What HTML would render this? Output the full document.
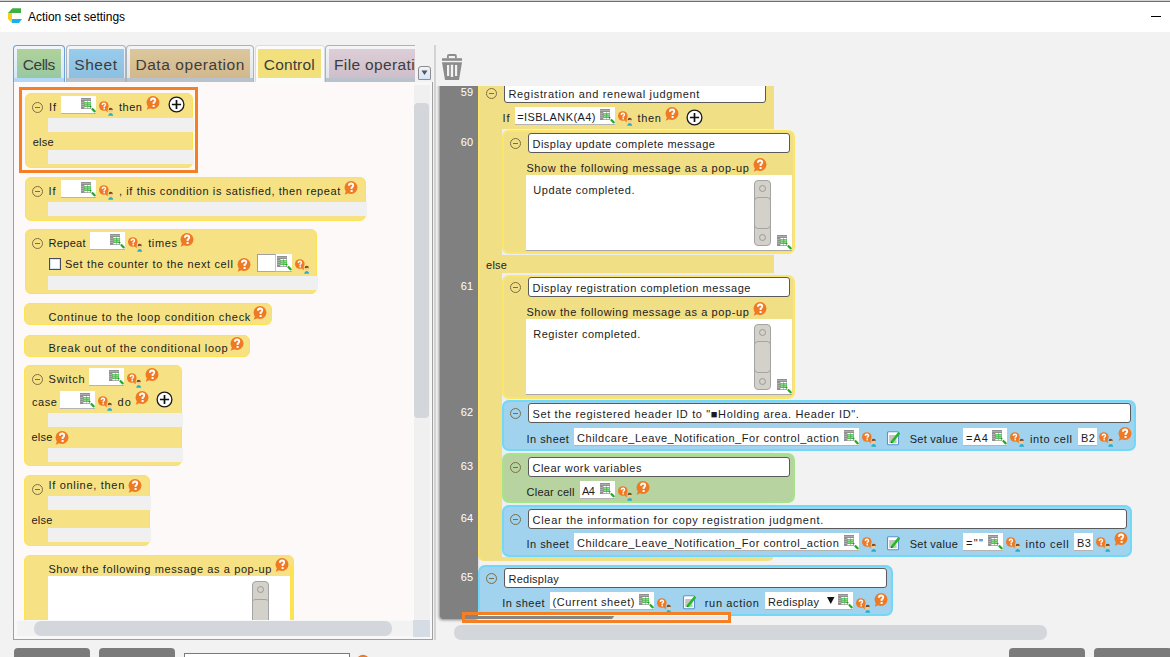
<!DOCTYPE html><html><head><meta charset="utf-8"><style>
html,body{margin:0;padding:0;}
body{width:1170px;height:657px;overflow:hidden;position:relative;background:#f2f2f2;font-family:"Liberation Sans",sans-serif;}
.t{position:absolute;white-space:nowrap;line-height:1;font-family:"Liberation Sans",sans-serif;}
svg{overflow:visible}
</style></head><body>
<svg width="0" height="0" style="position:absolute">
<defs>
<symbol id="grid" viewBox="0 0 15 15">
 <rect x="0" y="0" width="10" height="11" fill="#909090"/>
 <path d="M0 1.5H10M0 4.5H3.4M0 6.5H3.4M0 8.5H3.4" stroke="#c0c0c0" stroke-width="0.6"/>
 <rect x="3.4" y="3" width="3" height="1" fill="#fff"/><rect x="6.9" y="3" width="2.6" height="1" fill="#fff"/>
 <rect x="3.4" y="4" width="6.6" height="4.8" fill="#4cbf4c"/>
 <rect x="3.8" y="4.5" width="2.3" height="1.5" fill="#8fd88f"/><rect x="7.2" y="4.5" width="2.3" height="1.5" fill="#8fd88f"/>
 <rect x="3.8" y="6.6" width="2.3" height="1.5" fill="#8fd88f"/><rect x="7.2" y="6.6" width="2.3" height="1.5" fill="#8fd88f"/>
 <rect x="3.4" y="9" width="3" height="1.3" fill="#fff"/><rect x="6.9" y="9" width="2.6" height="1.3" fill="#fff"/>
 <circle cx="9.6" cy="8.6" r="0.9" fill="#1a9a1a"/>
 <path d="M11.6 11.2L13.6 13.3" stroke="#22aa22" stroke-width="2.3" stroke-linecap="round"/>
</symbol>
<symbol id="qp" viewBox="0 0 16 16">
 <circle cx="4.8" cy="5" r="4.8" fill="#ef7a25"/>
 <path d="M6 8.8L8.8 11.5L8.6 7.2Z" fill="#ef7a25"/>
 <path d="M3.2 3.9Q3.3 2.2 4.9 2.2Q6.6 2.3 6.5 3.8Q6.4 4.8 5.2 5.3V6.4" stroke="#fff" stroke-width="1.4" fill="none"/>
 <rect x="4.5" y="7" width="1.4" height="1.4" fill="#fff"/>
 <path d="M9.2 14.8Q9.4 12.3 11.7 12.1Q14 12.3 14.2 14.8Z" fill="#22b0c8"/>
 <circle cx="11.7" cy="9.6" r="2" fill="#f7c890"/>
 <path d="M9.6 9.2Q9.6 6.8 11.7 6.8Q13.8 6.8 13.8 9.2Q12.5 8.2 9.6 9.2Z" fill="#7a4a1c"/>
</symbol>
<symbol id="help" viewBox="0 0 15 15">
 <circle cx="7" cy="6.5" r="6.5" fill="#ef7a25"/>
 <path d="M2.2 9.2L0.7 13.8L6 11.6Z" fill="#ef7a25"/>
 <path d="M4.9 4.7Q5 2.5 7.1 2.5Q9.3 2.6 9.2 4.5Q9.1 5.8 7.6 6.5V8" stroke="#fff" stroke-width="1.9" fill="none"/>
 <rect x="6.6" y="9" width="2" height="2" fill="#fff"/>
</symbol>
<symbol id="plus" viewBox="0 0 17 17">
 <circle cx="8.5" cy="8.5" r="7.4" fill="#fff" stroke="#1a1a1a" stroke-width="1.3"/>
 <path d="M3.9 8.5H13.1M8.5 3.9V13.1" stroke="#111" stroke-width="1.7"/>
</symbol>
<symbol id="minus" viewBox="0 0 12 12">
 <circle cx="5.5" cy="5.5" r="5" fill="none" stroke="#7a6e48" stroke-width="1"/>
 <path d="M3 5.5H8" stroke="#7a6e48" stroke-width="1"/>
</symbol>
<symbol id="edit" viewBox="0 0 14 15">
 <rect x="1.5" y="0.8" width="11" height="13" rx="1" fill="#fff" stroke="#5a90d8" stroke-width="1.1"/>
 <rect x="3.2" y="4" width="7.3" height="7.5" fill="#c4c4c4"/>
 <rect x="3.2" y="10.5" width="7.3" height="1.5" fill="#9ade9a"/>
 <path d="M6 10.8L12.6 2.6" stroke="#22bb22" stroke-width="2.6" stroke-linecap="round"/>
 <path d="M6 10.8L5.2 12" stroke="#444" stroke-width="1"/>
</symbol>
</defs></svg>

<div style="position:absolute;left:0.0px;top:0.0px;width:1170.0px;height:1.0px;background:#d4d4d4"></div>
<div style="position:absolute;left:0.0px;top:1.0px;width:1170.0px;height:1.0px;background:#6e6e6e"></div>
<div style="position:absolute;left:0.0px;top:2.0px;width:1170.0px;height:30.0px;background:#fff"></div>
<svg style="position:absolute;left:7px;top:7px" width="16" height="17" viewBox="0 0 16 17">
<path d="M1 6L5.4 1.2L14 1.2V6Z" fill="#3cb043"/>
<path d="M1 6H5V16L1 12Z" fill="#f9cf1a"/>
<path d="M5 12H15L12 16H5Z" fill="#1ab0ec"/>
</svg>
<div class="t" style="left:28.0px;top:11px;font-size:12px;color:#000;letter-spacing:-0.019px;">Action set settings</div>
<div style="position:absolute;left:1151.0px;top:16.0px;width:10.0px;height:1.0px;background:#000"></div>
<div style="position:absolute;left:13.0px;top:45.0px;width:52.0px;height:37.0px;border:1px solid #6f9fd4;border-bottom:none;border-radius:4px 4px 0 0;box-sizing:border-box;background:linear-gradient(#f3f6fb,#cfe6fb);"></div>
<div style="position:absolute;left:17.0px;top:49.0px;width:44.0px;height:29.0px;background:linear-gradient(#b0d29a,#98c8a2)"></div>
<div style="position:absolute;left:14.0px;top:78.0px;width:50.0px;height:4.0px;background:#b3d7f7"></div>
<div class="t" style="left:22.8px;top:57px;font-size:15.5px;color:#3c3c3c;letter-spacing:-0.488px;">Cells</div>
<div style="position:absolute;left:65.5px;top:45.0px;width:60.5px;height:37.0px;border:1px solid #a9b3be;border-bottom:none;border-radius:4px 4px 0 0;box-sizing:border-box;background:linear-gradient(#f4f5f7,#dfe3e8);"></div>
<div style="position:absolute;left:69.0px;top:49.0px;width:54.5px;height:29.0px;background:linear-gradient(#98cced,#8cbfe0)"></div>
<div style="position:absolute;left:66.5px;top:78.0px;width:58.5px;height:4.0px;background:#b9c3cd"></div>
<div class="t" style="left:74.3px;top:57px;font-size:15.5px;color:#3c3c3c;letter-spacing:0.549px;">Sheet</div>
<div style="position:absolute;left:126.0px;top:45.0px;width:128.0px;height:37.0px;border:1px solid #a9b3be;border-bottom:none;border-radius:4px 4px 0 0;box-sizing:border-box;background:linear-gradient(#f4f5f7,#dfe3e8);"></div>
<div style="position:absolute;left:130.3px;top:49.0px;width:120.0px;height:29.0px;background:linear-gradient(#dcc79c,#d2b88c)"></div>
<div style="position:absolute;left:127.0px;top:78.0px;width:126.0px;height:4.0px;background:#b9c3cd"></div>
<div class="t" style="left:135.4px;top:57px;font-size:15.5px;color:#3c3c3c;letter-spacing:0.564px;">Data operation</div>
<div style="position:absolute;left:255.0px;top:45.0px;width:70.0px;height:37.0px;border:1px solid #d8dde3;border-bottom:none;border-radius:4px 4px 0 0;box-sizing:border-box;background:linear-gradient(#fbfbfb,#fbfbfb);"></div>
<div style="position:absolute;left:258.2px;top:49.0px;width:62.8px;height:29.0px;background:#f2e07c"></div>
<div class="t" style="left:263.8px;top:57px;font-size:15.5px;color:#3c3c3c;letter-spacing:0.139px;">Control</div>
<div style="position:absolute;left:325.3px;top:45px;width:90px;height:37px;overflow:hidden">
<div style="position:absolute;left:0;top:0;width:100px;height:37px;border:1px solid #a9b3be;border-bottom:none;border-radius:4px 4px 0 0;box-sizing:border-box;background:linear-gradient(#f4f5f7,#dfe3e8)"></div>
<div style="position:absolute;left:3.3px;top:4px;width:100px;height:29px;background:linear-gradient(#dccdd6,#cfbfcb)"></div>
<div style="position:absolute;left:1px;top:33px;width:100px;height:4px;background:#b9c3cd"></div>
<div class="t" style="left:8.7px;top:12px;font-size:15.5px;color:#3c3c3c;letter-spacing:0.37px">File operation</div>
</div>
<div style="position:absolute;left:418.0px;top:66.0px;width:13.0px;height:14.0px;border:1px solid #8c8c8c;border-radius:3px 3px 1px 1px;box-sizing:border-box;background:linear-gradient(#eef4fc,#d6e6f8);"></div>
<svg style="position:absolute;left:421px;top:70px" width="8" height="6"><path d="M0.5 0.5H6.5L3.5 5Z" fill="#555"/></svg>
<div style="position:absolute;left:13.0px;top:82.0px;width:420.0px;height:558.0px;border:1px solid #a0a0a0;border-top:none;box-sizing:border-box;background:#f8f8f8;"></div>
<div style="position:absolute;left:14.0px;top:82.0px;width:400.0px;height:538.0px;background:#fcf9f8;"></div>
<div style="position:absolute;left:414.0px;top:85.0px;width:15.5px;height:535.0px;background:#f0f0f0;"></div>
<div style="position:absolute;left:414.0px;top:103.0px;width:15.0px;height:315.0px;background:#d3d6da;border-radius:4px;"></div>
<div style="position:absolute;left:17.0px;top:621.0px;width:396.0px;height:15.0px;background:#f2f2f2;"></div>
<div style="position:absolute;left:34.0px;top:621.0px;width:358.0px;height:15.0px;background:#d3d6da;border-radius:7px;"></div>
<div style="position:absolute;left:413.0px;top:620.0px;width:17.0px;height:17.0px;background:#d5dce6;"></div>
<div style="position:absolute;left:434.0px;top:45.0px;width:2.0px;height:595.0px;background:#d3d3d3"></div>
<div style="position:absolute;left:14px;top:82px;width:399px;height:538px;overflow:hidden">
<div style="position:absolute;left:-14px;top:-82px;width:1170px;height:657px">
<div style="position:absolute;left:25.0px;top:93.0px;width:168.0px;height:75.0px;background:#f6e284;border-radius:6px;border:1px solid #fde253;box-sizing:border-box;"></div>
<div style="position:absolute;left:48.0px;top:118.0px;width:146.0px;height:14.0px;background:#f0f0f0"></div>
<div style="position:absolute;left:48.0px;top:150.0px;width:146.0px;height:14.0px;background:#f0f0f0"></div>
<svg style="position:absolute;left:32.0px;top:102.0px" width="12" height="12"><use href="#minus"/></svg>
<div class="t" style="left:49.0px;top:102px;font-size:11px;color:#1c1c1c;letter-spacing:0.875px;">If</div>
<div style="position:absolute;left:61.0px;top:96.0px;width:35.0px;height:18.0px;background:#fff;border-bottom:1px solid #b4b4b4;box-sizing:border-box;"></div>
<svg style="position:absolute;left:81.0px;top:98.0px" width="15" height="15"><use href="#grid"/></svg>
<svg style="position:absolute;left:99.0px;top:101.0px" width="16" height="16"><use href="#qp"/></svg>
<div class="t" style="left:119.0px;top:102px;font-size:11px;color:#1c1c1c;letter-spacing:0.521px;">then</div>
<svg style="position:absolute;left:146.0px;top:96.0px" width="15" height="15"><use href="#help"/></svg>
<svg style="position:absolute;left:167.5px;top:96.3px" width="17" height="17"><use href="#plus"/></svg>
<div class="t" style="left:32.7px;top:137px;font-size:11px;color:#1c1c1c;letter-spacing:0.271px;">else</div>
<div style="position:absolute;left:19.0px;top:87.0px;width:179.0px;height:86.0px;border:3px solid #f57f25;box-sizing:border-box;"></div>
<div style="position:absolute;left:25.0px;top:177.0px;width:341.0px;height:44.0px;background:#f6e284;border-radius:6px;border:1px solid #fde253;box-sizing:border-box;"></div>
<div style="position:absolute;left:48.0px;top:202.0px;width:319.0px;height:14.0px;background:#f0f0f0"></div>
<svg style="position:absolute;left:32.0px;top:186.0px" width="12" height="12"><use href="#minus"/></svg>
<div class="t" style="left:48.6px;top:186px;font-size:11px;color:#1c1c1c;letter-spacing:0.875px;">If</div>
<div style="position:absolute;left:61.0px;top:180.0px;width:35.0px;height:18.0px;background:#fff;border-bottom:1px solid #b4b4b4;box-sizing:border-box;"></div>
<svg style="position:absolute;left:81.0px;top:182.0px" width="15" height="15"><use href="#grid"/></svg>
<svg style="position:absolute;left:99.0px;top:185.0px" width="16" height="16"><use href="#qp"/></svg>
<div class="t" style="left:119.0px;top:186px;font-size:11px;color:#1c1c1c;letter-spacing:0.597px;">, if this condition is satisfied, then repeat</div>
<svg style="position:absolute;left:344.0px;top:181.0px" width="15" height="15"><use href="#help"/></svg>
<div style="position:absolute;left:25.0px;top:229.0px;width:292.0px;height:65.0px;background:#f6e284;border-radius:6px;border:1px solid #fde253;box-sizing:border-box;"></div>
<div style="position:absolute;left:48.0px;top:276.0px;width:270.0px;height:14.0px;background:#f0f0f0"></div>
<svg style="position:absolute;left:32.0px;top:238.0px" width="12" height="12"><use href="#minus"/></svg>
<div class="t" style="left:48.6px;top:238px;font-size:11px;color:#1c1c1c;letter-spacing:0.300px;">Repeat</div>
<div style="position:absolute;left:90.0px;top:232.0px;width:35.0px;height:18.0px;background:#fff;border-bottom:1px solid #b4b4b4;box-sizing:border-box;"></div>
<svg style="position:absolute;left:110.0px;top:234.0px" width="15" height="15"><use href="#grid"/></svg>
<svg style="position:absolute;left:128.0px;top:237.0px" width="16" height="16"><use href="#qp"/></svg>
<div class="t" style="left:148.2px;top:238px;font-size:11px;color:#1c1c1c;letter-spacing:0.630px;">times</div>
<svg style="position:absolute;left:180.0px;top:233.0px" width="15" height="15"><use href="#help"/></svg>
<div style="position:absolute;left:49.0px;top:258.0px;width:12.0px;height:12.0px;border:1px solid #4a4a58;box-sizing:border-box;background:#fff;box-shadow:inset 0 0 0 1px #cfe6fb;"></div>
<div class="t" style="left:64.9px;top:259px;font-size:11px;color:#1c1c1c;letter-spacing:0.624px;">Set the counter to the next cell</div>
<svg style="position:absolute;left:237.0px;top:258.0px" width="15" height="15"><use href="#help"/></svg>
<div style="position:absolute;left:257.0px;top:254.0px;width:35.0px;height:18.0px;background:#fff;border-bottom:1px solid #b4b4b4;box-sizing:border-box;"></div>
<svg style="position:absolute;left:277.0px;top:256.0px" width="15" height="15"><use href="#grid"/></svg>
<div style="position:absolute;left:257.0px;top:254.0px;width:19.0px;height:18.0px;border:1px solid #a0a0a0;border-right-color:#c8c8c8;border-bottom-color:#a8a8b0;box-sizing:border-box;"></div>
<svg style="position:absolute;left:295.0px;top:259.0px" width="16" height="16"><use href="#qp"/></svg>
<div style="position:absolute;left:24.0px;top:303.0px;width:248.0px;height:22.0px;background:#f6e284;border-radius:6px;border:1px solid #fde253;box-sizing:border-box;"></div>
<div class="t" style="left:48.4px;top:312px;font-size:11px;color:#1c1c1c;letter-spacing:0.703px;">Continue to the loop condition check</div>
<svg style="position:absolute;left:253.0px;top:306.0px" width="15" height="15"><use href="#help"/></svg>
<div style="position:absolute;left:24.0px;top:335.0px;width:226.0px;height:22.0px;background:#f6e284;border-radius:6px;border:1px solid #fde253;box-sizing:border-box;"></div>
<div class="t" style="left:48.4px;top:343px;font-size:11px;color:#1c1c1c;letter-spacing:0.690px;">Break out of the conditional loop</div>
<svg style="position:absolute;left:230.0px;top:337.0px" width="15" height="15"><use href="#help"/></svg>
<div style="position:absolute;left:24.0px;top:365.0px;width:158.0px;height:101.0px;background:#f6e284;border-radius:6px;border:1px solid #fde253;box-sizing:border-box;"></div>
<div style="position:absolute;left:48.0px;top:413.0px;width:135.0px;height:14.0px;background:#f0f0f0"></div>
<div style="position:absolute;left:48.0px;top:448.0px;width:135.0px;height:14.0px;background:#f0f0f0"></div>
<svg style="position:absolute;left:32.0px;top:374.0px" width="12" height="12"><use href="#minus"/></svg>
<div class="t" style="left:48.6px;top:374px;font-size:11px;color:#1c1c1c;letter-spacing:0.719px;">Switch</div>
<div style="position:absolute;left:89.0px;top:368.0px;width:35.0px;height:18.0px;background:#fff;border-bottom:1px solid #b4b4b4;box-sizing:border-box;"></div>
<svg style="position:absolute;left:109.0px;top:370.0px" width="15" height="15"><use href="#grid"/></svg>
<svg style="position:absolute;left:127.0px;top:373.0px" width="16" height="16"><use href="#qp"/></svg>
<svg style="position:absolute;left:145.0px;top:368.0px" width="15" height="15"><use href="#help"/></svg>
<div class="t" style="left:31.9px;top:397px;font-size:11px;color:#1c1c1c;letter-spacing:0.583px;">case</div>
<div style="position:absolute;left:60.0px;top:391.0px;width:35.0px;height:18.0px;background:#fff;border-bottom:1px solid #b4b4b4;box-sizing:border-box;"></div>
<svg style="position:absolute;left:80.0px;top:393.0px" width="15" height="15"><use href="#grid"/></svg>
<svg style="position:absolute;left:98.0px;top:396.0px" width="16" height="16"><use href="#qp"/></svg>
<div class="t" style="left:117.4px;top:397px;font-size:11px;color:#1c1c1c;letter-spacing:1.250px;">do</div>
<svg style="position:absolute;left:135.0px;top:391.0px" width="15" height="15"><use href="#help"/></svg>
<svg style="position:absolute;left:156.4px;top:391.1px" width="17" height="17"><use href="#plus"/></svg>
<div class="t" style="left:31.4px;top:432px;font-size:11px;color:#1c1c1c;letter-spacing:0.271px;">else</div>
<svg style="position:absolute;left:55.0px;top:431.0px" width="15" height="15"><use href="#help"/></svg>
<div style="position:absolute;left:24.0px;top:475.0px;width:126.0px;height:71.0px;background:#f6e284;border-radius:6px;border:1px solid #fde253;box-sizing:border-box;"></div>
<div style="position:absolute;left:48.0px;top:496.0px;width:103.0px;height:14.0px;background:#f0f0f0"></div>
<div style="position:absolute;left:48.0px;top:528.0px;width:103.0px;height:14.0px;background:#f0f0f0"></div>
<svg style="position:absolute;left:32.0px;top:484.0px" width="12" height="12"><use href="#minus"/></svg>
<div class="t" style="left:48.4px;top:480px;font-size:11px;color:#1c1c1c;letter-spacing:0.705px;">If online, then</div>
<svg style="position:absolute;left:128.0px;top:479.0px" width="15" height="15"><use href="#help"/></svg>
<div class="t" style="left:31.4px;top:515px;font-size:11px;color:#1c1c1c;letter-spacing:0.271px;">else</div>
<div style="position:absolute;left:24.0px;top:555.0px;width:270.0px;height:105.0px;background:#f6e284;border-radius:6px;border:1px solid #fde253;box-sizing:border-box;"></div>
<div style="position:absolute;left:290.0px;top:565.0px;width:3.0px;height:95.0px;background:#fde253"></div>
<div class="t" style="left:48.4px;top:564px;font-size:11px;color:#1c1c1c;letter-spacing:0.608px;">Show the following message as a pop-up</div>
<svg style="position:absolute;left:275.0px;top:558.0px" width="15" height="15"><use href="#help"/></svg>
<div style="position:absolute;left:48.0px;top:576.0px;width:242.0px;height:64.0px;background:#fff"></div>
<div style="position:absolute;left:252.0px;top:581.0px;width:17.0px;height:69.0px;background:#d3d1c9;border:1px solid #a4a4a4;border-radius:4px;box-sizing:border-box;"></div>
<div style="position:absolute;left:252.0px;top:599.0px;width:17.0px;height:51.0px;border-top:1px solid #a4a4a4;border-radius:4px;box-sizing:border-box;"></div>
<svg style="position:absolute;left:256px;top:585px" width="9" height="9"><circle cx="4.5" cy="4.5" r="3" fill="none" stroke="#999"/></svg>
</div></div>
<div style="position:absolute;left:436px;top:86px;width:734px;height:537px;overflow:hidden">
<div style="position:absolute;left:-436px;top:-86px;width:1170px;height:657px">
<div style="position:absolute;left:440.0px;top:60.0px;width:38.0px;height:559.0px;background:#808080;border-radius:0 0 0 4px;box-shadow:-1px 1px 3px rgba(0,0,0,0.45);"></div>
<div class="t" style="left:460.8px;top:87px;font-size:11px;color:#fff;letter-spacing:0.050px;">59</div>
<div class="t" style="left:460.8px;top:137px;font-size:11px;color:#fff;letter-spacing:0.050px;">60</div>
<div class="t" style="left:460.8px;top:281px;font-size:11px;color:#fff;letter-spacing:0.050px;">61</div>
<div class="t" style="left:460.8px;top:407px;font-size:11px;color:#fff;letter-spacing:0.050px;">62</div>
<div class="t" style="left:460.8px;top:461px;font-size:11px;color:#fff;letter-spacing:0.050px;">63</div>
<div class="t" style="left:460.8px;top:513px;font-size:11px;color:#fff;letter-spacing:0.050px;">64</div>
<div class="t" style="left:460.8px;top:572px;font-size:11px;color:#fff;letter-spacing:0.050px;">65</div>
<div style="position:absolute;left:478.0px;top:60.0px;width:296.0px;height:501.0px;background:#f1df86;border-radius:0 0 6px 6px;box-shadow:inset 2px 0 0 #fbe56c;"></div>
<svg style="position:absolute;left:486.0px;top:88.0px" width="12" height="12"><use href="#minus"/></svg>
<div style="position:absolute;left:504.0px;top:70.0px;width:262.0px;height:33.0px;background:#fff;border:1px solid #5a5a5a;border-radius:3px;box-sizing:border-box;"></div>
<div class="t" style="left:508.5px;top:89px;font-size:11px;color:#1c1c1c;letter-spacing:0.653px;">Registration and renewal judgment</div>
<div class="t" style="left:502.6px;top:113px;font-size:11px;color:#1c1c1c;letter-spacing:0.875px;">If</div>
<div style="position:absolute;left:515.0px;top:107.0px;width:100.0px;height:18.0px;background:#fff;border-bottom:1px solid #b4b4b4;box-sizing:border-box;"></div>
<svg style="position:absolute;left:600.0px;top:109.0px" width="15" height="15"><use href="#grid"/></svg>
<div class="t" style="left:517.2px;top:112px;font-size:11px;color:#1c1c1c;letter-spacing:0.418px;">=ISBLANK(A4)</div>
<svg style="position:absolute;left:618.0px;top:111.0px" width="16" height="16"><use href="#qp"/></svg>
<div class="t" style="left:637.6px;top:113px;font-size:11px;color:#1c1c1c;letter-spacing:0.654px;">then</div>
<svg style="position:absolute;left:665.0px;top:107.0px" width="15" height="15"><use href="#help"/></svg>
<svg style="position:absolute;left:686.0px;top:108.5px" width="17" height="17"><use href="#plus"/></svg>
<div style="position:absolute;left:502.0px;top:129.0px;width:272.0px;height:126.0px;background:#eceef2"></div>
<div style="position:absolute;left:502.0px;top:273.0px;width:272.0px;height:284.0px;background:#eceef2"></div>
<div style="position:absolute;left:502.0px;top:130.0px;width:293.0px;height:124.0px;background:#f1df86;border:2px solid #fbe56c;border-radius:7px;box-sizing:border-box;"></div>
<svg style="position:absolute;left:510.0px;top:138.0px" width="12" height="12"><use href="#minus"/></svg>
<div style="position:absolute;left:528.0px;top:133.0px;width:262.0px;height:20.0px;background:#fff;border:1px solid #5a5a5a;border-radius:3px;box-sizing:border-box;"></div>
<div class="t" style="left:532.5px;top:139px;font-size:11px;color:#1c1c1c;letter-spacing:0.475px;">Display update complete message</div>
<div class="t" style="left:526.4px;top:163px;font-size:11px;color:#1c1c1c;letter-spacing:0.591px;">Show the following message as a pop-up</div>
<svg style="position:absolute;left:753.0px;top:158.0px" width="15" height="15"><use href="#help"/></svg>
<div style="position:absolute;left:526.0px;top:175.0px;width:266.0px;height:76.0px;background:#fff;border-bottom:1px solid #a8a8a8;box-sizing:border-box;"></div>
<div class="t" style="left:533.3px;top:185px;font-size:11px;color:#1c1c1c;letter-spacing:0.556px;">Update completed.</div>
<div style="position:absolute;left:754.0px;top:180.0px;width:17.0px;height:66.0px;background:#d3d1c9;border:1px solid #a4a4a4;border-radius:4px;box-sizing:border-box;"></div>
<div style="position:absolute;left:754.0px;top:197.0px;width:17.0px;height:32.0px;border:1px solid #a4a4a4;border-radius:4px;box-sizing:border-box;"></div>
<svg style="position:absolute;left:758.0px;top:184.0px" width="9" height="60"><circle cx="4.5" cy="4.5" r="3" fill="none" stroke="#999"/><circle cx="4.5" cy="53.5" r="3" fill="none" stroke="#999"/></svg>
<svg style="position:absolute;left:777.0px;top:235.0px" width="15" height="15"><use href="#grid"/></svg>
<div class="t" style="left:486.0px;top:260px;font-size:11px;color:#1c1c1c;letter-spacing:0.271px;">else</div>
<div style="position:absolute;left:502.0px;top:275.0px;width:293.0px;height:124.0px;background:#f1df86;border:2px solid #fbe56c;border-radius:7px;box-sizing:border-box;"></div>
<svg style="position:absolute;left:510.0px;top:282.0px" width="12" height="12"><use href="#minus"/></svg>
<div style="position:absolute;left:528.0px;top:277.0px;width:262.0px;height:20.0px;background:#fff;border:1px solid #5a5a5a;border-radius:3px;box-sizing:border-box;"></div>
<div class="t" style="left:532.5px;top:283px;font-size:11px;color:#1c1c1c;letter-spacing:0.538px;">Display registration completion message</div>
<div class="t" style="left:526.4px;top:307px;font-size:11px;color:#1c1c1c;letter-spacing:0.591px;">Show the following message as a pop-up</div>
<svg style="position:absolute;left:753.0px;top:302.0px" width="15" height="15"><use href="#help"/></svg>
<div style="position:absolute;left:526.0px;top:319.0px;width:266.0px;height:76.0px;background:#fff;border-bottom:1px solid #a8a8a8;box-sizing:border-box;"></div>
<div class="t" style="left:533.3px;top:329px;font-size:11px;color:#1c1c1c;letter-spacing:0.507px;">Register completed.</div>
<div style="position:absolute;left:754.0px;top:324.0px;width:17.0px;height:66.0px;background:#d3d1c9;border:1px solid #a4a4a4;border-radius:4px;box-sizing:border-box;"></div>
<div style="position:absolute;left:754.0px;top:341.0px;width:17.0px;height:32.0px;border:1px solid #a4a4a4;border-radius:4px;box-sizing:border-box;"></div>
<svg style="position:absolute;left:758.0px;top:328.0px" width="9" height="60"><circle cx="4.5" cy="4.5" r="3" fill="none" stroke="#999"/><circle cx="4.5" cy="53.5" r="3" fill="none" stroke="#999"/></svg>
<svg style="position:absolute;left:777.0px;top:379.0px" width="15" height="15"><use href="#grid"/></svg>
<div style="position:absolute;left:502.0px;top:400.0px;width:634.0px;height:51.0px;background:#a1d3ee;border:2px solid #72d8f8;border-radius:7px;box-sizing:border-box;"></div>
<svg style="position:absolute;left:510.0px;top:408.0px" width="12" height="12"><use href="#minus"/></svg>
<div style="position:absolute;left:528.0px;top:403.0px;width:603.0px;height:20.0px;background:#fff;border:1px solid #5a5a5a;border-radius:3px;box-sizing:border-box;"></div>
<div class="t" style="left:532.5px;top:409px;font-size:11px;color:#1c1c1c;letter-spacing:0.634px;">Set the registered header ID to "■Holding area. Header ID".</div>
<div class="t" style="left:526.6px;top:434px;font-size:11px;color:#1c1c1c;letter-spacing:0.445px;">In sheet</div>
<div style="position:absolute;left:574.0px;top:428.0px;width:285.0px;height:18.0px;background:#fff;border-bottom:1px solid #b4b4b4;box-sizing:border-box;"></div>
<svg style="position:absolute;left:844.0px;top:430.0px" width="15" height="15"><use href="#grid"/></svg>
<div class="t" style="left:577.0px;top:433px;font-size:11px;color:#1c1c1c;letter-spacing:0.535px;">Childcare_Leave_Notification_For control_action</div>
<svg style="position:absolute;left:862.0px;top:432.0px" width="16" height="16"><use href="#qp"/></svg>
<svg style="position:absolute;left:886.0px;top:431.0px" width="14" height="15"><use href="#edit"/></svg>
<div class="t" style="left:909.7px;top:434px;font-size:11px;color:#1c1c1c;letter-spacing:0.274px;">Set value</div>
<div style="position:absolute;left:963.0px;top:428.0px;width:44.0px;height:18.0px;background:#fff;border-bottom:1px solid #b4b4b4;box-sizing:border-box;"></div>
<svg style="position:absolute;left:992.0px;top:430.0px" width="15" height="15"><use href="#grid"/></svg>
<div class="t" style="left:966.0px;top:433px;font-size:11px;color:#1c1c1c;letter-spacing:1.055px;">=A4</div>
<svg style="position:absolute;left:1010.0px;top:432.0px" width="16" height="16"><use href="#qp"/></svg>
<div class="t" style="left:1030.0px;top:434px;font-size:11px;color:#1c1c1c;letter-spacing:0.586px;">into cell</div>
<div style="position:absolute;left:1078.0px;top:428.0px;width:19.0px;height:18.0px;background:#fff;border-bottom:1px solid #b4b4b4;box-sizing:border-box;"></div>
<div class="t" style="left:1081.0px;top:433px;font-size:11px;color:#1c1c1c;letter-spacing:0.531px;">B2</div>
<svg style="position:absolute;left:1099.0px;top:432.0px" width="16" height="16"><use href="#qp"/></svg>
<svg style="position:absolute;left:1118.0px;top:427.0px" width="15" height="15"><use href="#help"/></svg>
<div style="position:absolute;left:502.0px;top:453.0px;width:293.0px;height:50.0px;background:#b7d3a0;border:2px solid #a6e48a;border-radius:7px;box-sizing:border-box;"></div>
<svg style="position:absolute;left:510.0px;top:462.0px" width="12" height="12"><use href="#minus"/></svg>
<div style="position:absolute;left:528.0px;top:457.0px;width:262.0px;height:20.0px;background:#fff;border:1px solid #5a5a5a;border-radius:3px;box-sizing:border-box;"></div>
<div class="t" style="left:532.5px;top:463px;font-size:11px;color:#1c1c1c;letter-spacing:0.487px;">Clear work variables</div>
<div class="t" style="left:526.6px;top:487px;font-size:11px;color:#1c1c1c;letter-spacing:0.217px;">Clear cell</div>
<div style="position:absolute;left:580.0px;top:481.0px;width:35.0px;height:18.0px;background:#fff;border-bottom:1px solid #b4b4b4;box-sizing:border-box;"></div>
<svg style="position:absolute;left:600.0px;top:483.0px" width="15" height="15"><use href="#grid"/></svg>
<div class="t" style="left:582.0px;top:486px;font-size:11px;color:#1c1c1c;letter-spacing:-0.469px;">A4</div>
<svg style="position:absolute;left:618.0px;top:486.0px" width="16" height="16"><use href="#qp"/></svg>
<svg style="position:absolute;left:636.0px;top:481.0px" width="15" height="15"><use href="#help"/></svg>
<div style="position:absolute;left:502.0px;top:505.0px;width:630.0px;height:52.0px;background:#a1d3ee;border:2px solid #72d8f8;border-radius:7px;box-sizing:border-box;"></div>
<svg style="position:absolute;left:510.0px;top:514.0px" width="12" height="12"><use href="#minus"/></svg>
<div style="position:absolute;left:528.0px;top:509.0px;width:599.0px;height:20.0px;background:#fff;border:1px solid #5a5a5a;border-radius:3px;box-sizing:border-box;"></div>
<div class="t" style="left:532.5px;top:515px;font-size:11px;color:#1c1c1c;letter-spacing:0.725px;">Clear the information for copy registration judgment.</div>
<div class="t" style="left:526.6px;top:539px;font-size:11px;color:#1c1c1c;letter-spacing:0.445px;">In sheet</div>
<div style="position:absolute;left:574.0px;top:533.0px;width:285.0px;height:18.0px;background:#fff;border-bottom:1px solid #b4b4b4;box-sizing:border-box;"></div>
<svg style="position:absolute;left:844.0px;top:535.0px" width="15" height="15"><use href="#grid"/></svg>
<div class="t" style="left:577.0px;top:538px;font-size:11px;color:#1c1c1c;letter-spacing:0.535px;">Childcare_Leave_Notification_For control_action</div>
<svg style="position:absolute;left:862.0px;top:537.0px" width="16" height="16"><use href="#qp"/></svg>
<svg style="position:absolute;left:886.0px;top:536.0px" width="14" height="15"><use href="#edit"/></svg>
<div class="t" style="left:909.7px;top:539px;font-size:11px;color:#1c1c1c;letter-spacing:0.274px;">Set value</div>
<div style="position:absolute;left:963.0px;top:533.0px;width:40.0px;height:18.0px;background:#fff;border-bottom:1px solid #b4b4b4;box-sizing:border-box;"></div>
<svg style="position:absolute;left:988.0px;top:535.0px" width="15" height="15"><use href="#grid"/></svg>
<div class="t" style="left:966.0px;top:538px;font-size:11px;color:#1c1c1c;letter-spacing:1.383px;">=""</div>
<svg style="position:absolute;left:1006.0px;top:537.0px" width="16" height="16"><use href="#qp"/></svg>
<div class="t" style="left:1025.6px;top:539px;font-size:11px;color:#1c1c1c;letter-spacing:0.711px;">into cell</div>
<div style="position:absolute;left:1074.0px;top:533.0px;width:19.0px;height:18.0px;background:#fff;border-bottom:1px solid #b4b4b4;box-sizing:border-box;"></div>
<div class="t" style="left:1077.0px;top:538px;font-size:11px;color:#1c1c1c;letter-spacing:0.531px;">B3</div>
<svg style="position:absolute;left:1096.0px;top:537.0px" width="16" height="16"><use href="#qp"/></svg>
<svg style="position:absolute;left:1114.0px;top:532.0px" width="15" height="15"><use href="#help"/></svg>
<div style="position:absolute;left:478.0px;top:565.0px;width:415.0px;height:51.0px;background:#a1d3ee;border:2px solid #72d8f8;border-radius:7px;box-sizing:border-box;"></div>
<svg style="position:absolute;left:486.0px;top:573.0px" width="12" height="12"><use href="#minus"/></svg>
<div style="position:absolute;left:504.0px;top:568.0px;width:383.0px;height:20.0px;background:#fff;border:1px solid #5a5a5a;border-radius:3px;box-sizing:border-box;"></div>
<div class="t" style="left:508.5px;top:574px;font-size:11px;color:#1c1c1c;letter-spacing:0.248px;">Redisplay</div>
<div class="t" style="left:502.3px;top:598px;font-size:11px;color:#1c1c1c;letter-spacing:0.445px;">In sheet</div>
<div style="position:absolute;left:550.0px;top:592.0px;width:104.0px;height:18.0px;background:#fff;border-bottom:1px solid #b4b4b4;box-sizing:border-box;"></div>
<svg style="position:absolute;left:639.0px;top:594.0px" width="15" height="15"><use href="#grid"/></svg>
<div class="t" style="left:552.5px;top:597px;font-size:11px;color:#1c1c1c;letter-spacing:0.571px;">(Current sheet)</div>
<svg style="position:absolute;left:657.0px;top:598.0px" width="16" height="16"><use href="#qp"/></svg>
<svg style="position:absolute;left:681.5px;top:595.0px" width="14" height="15"><use href="#edit"/></svg>
<div class="t" style="left:704.8px;top:598px;font-size:11px;color:#1c1c1c;letter-spacing:0.651px;">run action</div>
<div style="position:absolute;left:765.0px;top:592.0px;width:88.0px;height:18.0px;background:#fff;border-bottom:1px solid #b4b4b4;box-sizing:border-box;"></div>
<svg style="position:absolute;left:838.0px;top:594.0px" width="15" height="15"><use href="#grid"/></svg>
<div class="t" style="left:768.0px;top:597px;font-size:11px;color:#1c1c1c;letter-spacing:0.336px;">Redisplay</div>
<svg style="position:absolute;left:826.5px;top:597px" width="9" height="8"><path d="M0 0H7.5L3.75 7Z" fill="#111"/></svg>
<svg style="position:absolute;left:856.0px;top:598.0px" width="16" height="16"><use href="#qp"/></svg>
<svg style="position:absolute;left:874.0px;top:593.0px" width="15" height="15"><use href="#help"/></svg>
<div style="position:absolute;left:465.0px;top:615.0px;width:266.0px;height:4.0px;background:#e9e9e9;"></div>
<svg style="position:absolute;left:465px;top:615px" width="150" height="4"><path d="M0 0H150L147 4H0Z" fill="#858585"/></svg>
<div style="position:absolute;left:478.0px;top:615.0px;width:253.0px;height:1.0px;background:#fff;"></div>
</div></div>
<div style="position:absolute;left:462.0px;top:612.0px;width:269.0px;height:10.8px;border:3px solid #f57f25;box-sizing:border-box;"></div>
<div style="position:absolute;left:454.0px;top:625.0px;width:593.0px;height:15.0px;background:#d3d6da;border-radius:7px;"></div>
<svg style="position:absolute;left:442px;top:54px" width="21" height="27" viewBox="0 0 21 27">
<path d="M5 4.2V1.8Q5 0 7 0H12.8Q14.8 0 14.8 1.8V4.2H13V2H6.8V4.2Z" fill="#8c8c8c"/>
<path d="M0 4.2H20V6.8H0Z" fill="#8c8c8c"/>
<path d="M0 8.2H20L17 26H3Z M5 11V22H7.2V11Z M8.8 10.8V23H11.2V10.8Z M13 11V22H15.2V11Z" fill="#8c8c8c" fill-rule="evenodd"/>
</svg>
<div style="position:absolute;left:14.0px;top:648.0px;width:76.0px;height:22.0px;background:#7b7b7b;border-radius:4px;"></div>
<div style="position:absolute;left:99.0px;top:648.0px;width:76.0px;height:22.0px;background:#7b7b7b;border-radius:4px;"></div>
<div style="position:absolute;left:1009.0px;top:648.0px;width:76.0px;height:22.0px;background:#7b7b7b;border-radius:4px;"></div>
<div style="position:absolute;left:1094.0px;top:648.0px;width:78.0px;height:22.0px;background:#7b7b7b;border-radius:4px;"></div>
<div style="position:absolute;left:184.0px;top:652.5px;width:166.0px;height:17.5px;background:#fff;border:1px solid #7a7a7a;box-sizing:border-box;"></div>
<svg style="position:absolute;left:356px;top:654px" width="15" height="15"><circle cx="7" cy="7" r="6.3" fill="#f07a22"/></svg>
</body></html>
